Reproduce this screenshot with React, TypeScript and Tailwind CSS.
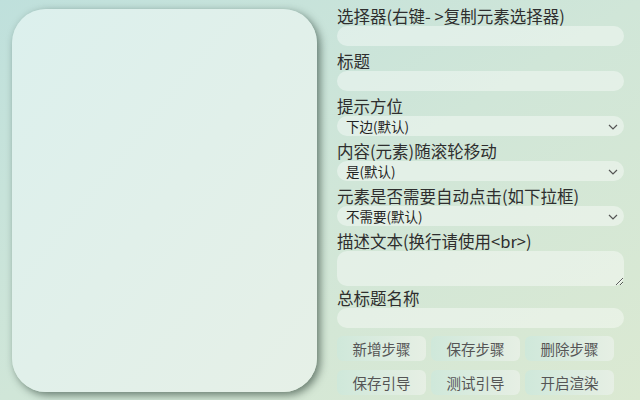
import React from "react";

const font = { fontFamily: '"Microsoft YaHei", "Noto Sans CJK SC", "Noto Sans", sans-serif' };

function Chevron() {
  return (
    <svg
      width="10"
      height="6"
      viewBox="0 0 10 6"
      className="pointer-events-none absolute right-[6px] top-[8px]"
    >
      <path d="M1 1l4 4 4-4" fill="none" stroke="#555" strokeWidth="1.2" />
    </svg>
  );
}

function Label({ text }: { text: string }) {
  return <div className="h-5 text-[16.5px] leading-5 text-[#2e2e2e]">{text}</div>;
}

function Field({ label, children }: { label: string; children: React.ReactNode }) {
  return (
    <div className="mb-[5px]">
      <Label text={label} />
      {children}
    </div>
  );
}

function TextInput() {
  return <input className="block h-5 w-full rounded-[10px] bg-white/40 px-2 text-[13px] outline-none" />;
}

function Select({ value }: { value: string }) {
  return (
    <div className="relative">
      <select className="block h-5 w-full appearance-none rounded-[10px] bg-white/40 pl-[9px] text-[13.5px] leading-5 text-[#222] outline-none">
        <option>{value}</option>
      </select>
      <Chevron />
    </div>
  );
}

function Btn({ text }: { text: string }) {
  return (
    <button className="h-[25px] w-[89px] rounded-md bg-gradient-to-r from-[#cfe8da] to-[#e6efe4] text-[14.5px] text-[#555]">
      {text}
    </button>
  );
}

export default function App() {
  return (
    <div
      style={font}
      className="flex h-[400px] w-[640px] bg-gradient-to-br from-[#bfe0dc] via-[#d0e6d8] to-[#dbe9d2] pl-3 pt-[9px]"
    >
      <div className="h-[383px] w-[305px] shrink-0 rounded-[34px] bg-gradient-to-br from-[#dcf0ed] to-[#e6f0e7] shadow-[3px_3px_9px_rgba(30,50,40,0.6)]" />

      <div className="-mt-[3px] ml-5 flex w-[287px] flex-col">
        <Field label="选择器(右键- >复制元素选择器)">
          <TextInput />
        </Field>
        <Field label="标题">
          <TextInput />
        </Field>
        <Field label="提示方位">
          <Select value="下边(默认)" />
        </Field>
        <Field label="内容(元素)随滚轮移动">
          <Select value="是(默认)" />
        </Field>
        <Field label="元素是否需要自动点击(如下拉框)">
          <Select value="不需要(默认)" />
        </Field>
        <div className="mb-[2px]">
          <Label text="描述文本(换行请使用<br>)" />
          <textarea className="block h-[35px] w-full rounded-[10px] bg-white/40 px-2 text-[13px] outline-none" />
        </div>
        <Field label="总标题名称">
          <TextInput />
        </Field>

        <div className="mt-[3px] grid grid-cols-[89px_89px_89px] gap-x-[5px] gap-y-[9px]">
          <Btn text="新增步骤" />
          <Btn text="保存步骤" />
          <Btn text="删除步骤" />
          <Btn text="保存引导" />
          <Btn text="测试引导" />
          <Btn text="开启渲染" />
        </div>
      </div>
    </div>
  );
}
